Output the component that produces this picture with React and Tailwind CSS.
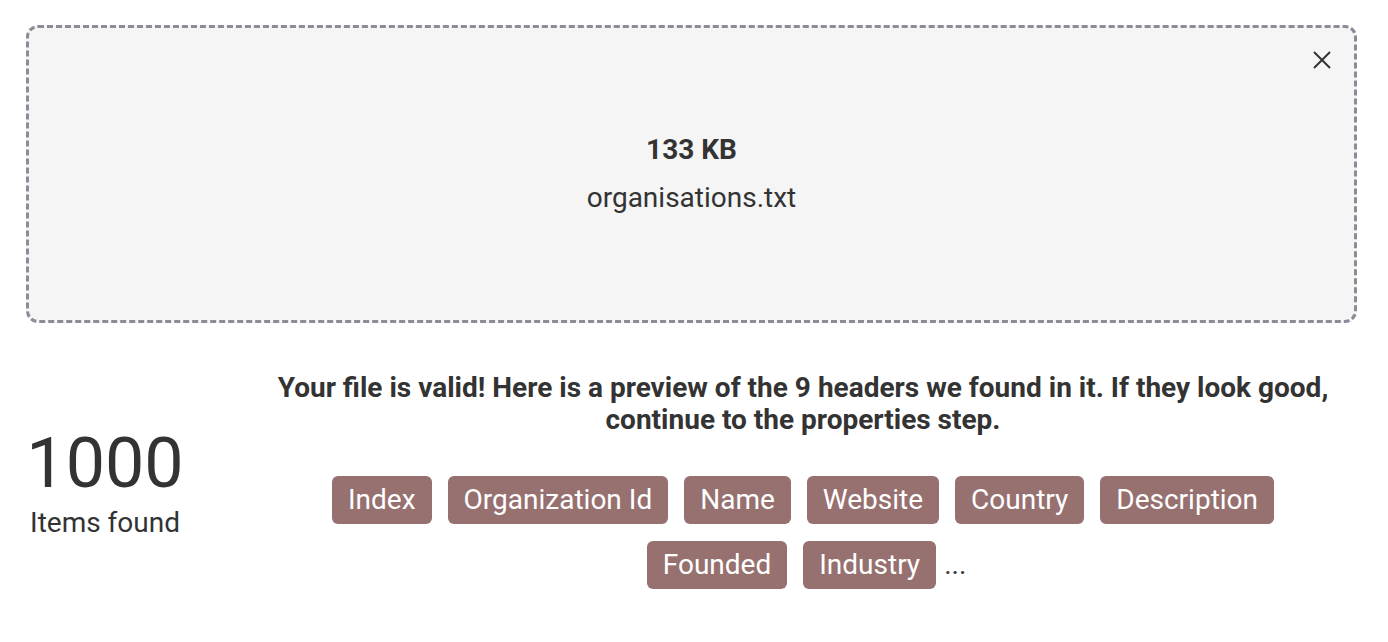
import React from 'react';

const headers = ['Index', 'Organization Id', 'Name', 'Website', 'Country', 'Description', 'Founded', 'Industry'];

const App = () => {
  return (
    <div className="min-h-screen bg-white pl-[26px] pr-[31px] pt-[25px] text-[#333333]" style={{ fontFamily: 'Roboto, "Liberation Sans", sans-serif' }}>
      {/* Dropzone with selected file */}
      <div className="relative flex h-[298px] flex-col items-center justify-center rounded-[12px] border-[3px] border-dashed border-[#8a8d98] bg-[#f4f5f4]">
        <button className="absolute right-[22px] top-[22px] text-[#333333]" aria-label="Remove file">
          <svg width="20" height="20" viewBox="0 0 20 20" fill="none" stroke="currentColor" strokeWidth="2" strokeLinecap="butt">
            <path d="M2 2L18 18M18 2L2 18" />
          </svg>
        </button>
        <p className="text-[28px] font-bold leading-[32px]">133 KB</p>
        <p className="mt-[16px] text-[28px] leading-[32px]">organisations.txt</p>
      </div>

      {/* Summary */}
      <div className="mt-[49px] flex items-center">
        <div className="flex w-[158px] flex-col items-center">
          <span className="text-[70px] leading-[80px]">1000</span>
          <span className="mt-[4px] text-[28px] leading-[32px]">Items found</span>
        </div>
        <div className="ml-[79px] mr-[14px] flex flex-1 flex-col items-center">
          <p className="text-center text-[28px] font-bold leading-[32px]">
            Your file is valid! Here is a preview of the 9 headers we found in it. If they look good, continue to the properties step.
          </p>
          <div className="mt-[40px] flex flex-wrap items-baseline justify-center gap-x-[16px] gap-y-[17px]">
            {headers.map((h, i) => (
              <React.Fragment key={h}>
                <span className="rounded-[6px] bg-[#977170] px-[16px] text-[28px] leading-[48px] text-white">{h}</span>
                {i === headers.length - 1 && <span className="-ml-[8px] -mr-[7px] text-[28px] leading-[48px]">...</span>}
              </React.Fragment>
            ))}
          </div>
        </div>
      </div>
    </div>
  );
};

export default App;
